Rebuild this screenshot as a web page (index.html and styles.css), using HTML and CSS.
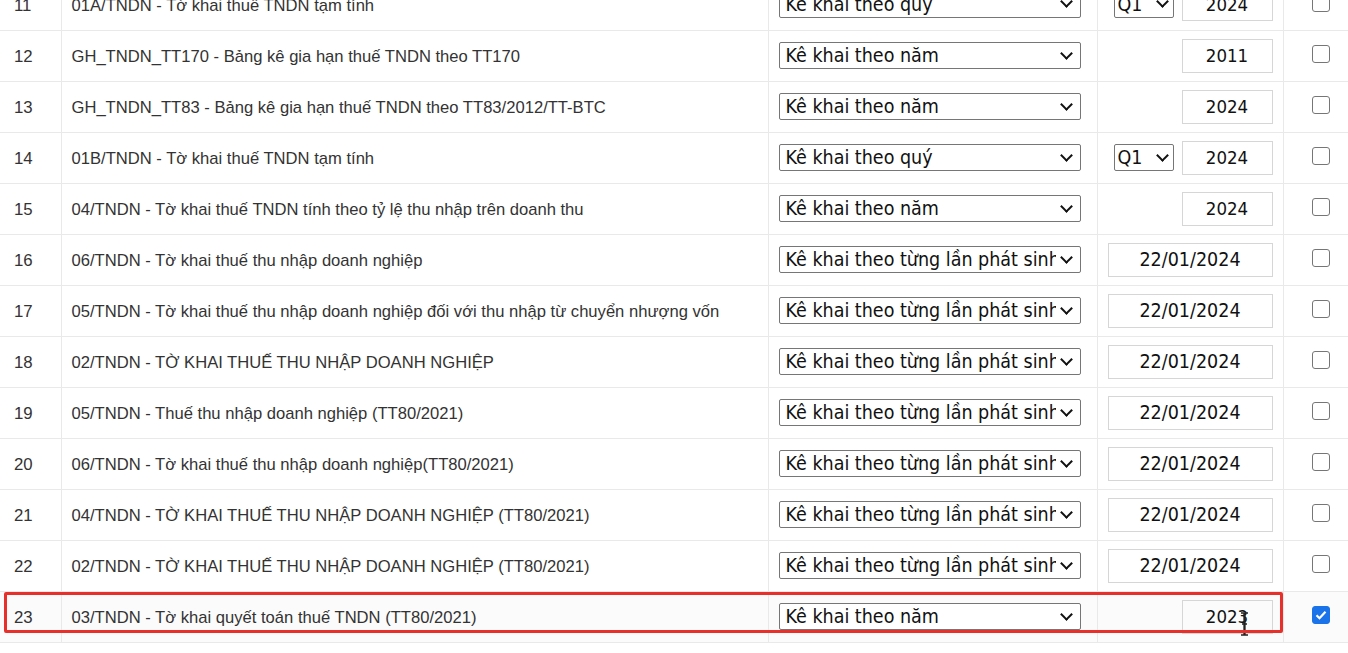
FILE: index.html
```html
<!DOCTYPE html>
<html lang="vi">
<head>
<meta charset="utf-8">
<title>Tờ khai TNDN</title>
<link rel="stylesheet" href="styles.css">
</head>
<body>
<div class="wrap">
<table class="grid">
<colgroup>
<col class="c-no"><col class="c-name"><col class="c-type"><col class="c-period"><col class="c-chk">
</colgroup>
<tbody>
<tr>
<td class="no">11</td><td class="name">01A/TNDN - Tờ khai thuế TNDN tạm tính</td>
<td><div class="sel wide"><span>Kê khai theo quý</span><i class="car"></i></div></td>
<td><div class="period"><div class="sel q"><span>Q1</span><i class="car"></i></div><div class="inp year">2024</div></div></td>
<td class="chk"><span class="box"></span></td>
</tr>
<tr>
<td class="no">12</td><td class="name">GH_TNDN_TT170 - Bảng kê gia hạn thuế TNDN theo TT170</td>
<td><div class="sel wide"><span>Kê khai theo năm</span><i class="car"></i></div></td>
<td><div class="period"><div class="inp year">2011</div></div></td>
<td class="chk"><span class="box"></span></td>
</tr>
<tr>
<td class="no">13</td><td class="name">GH_TNDN_TT83 - Bảng kê gia hạn thuế TNDN theo TT83/2012/TT-BTC</td>
<td><div class="sel wide"><span>Kê khai theo năm</span><i class="car"></i></div></td>
<td><div class="period"><div class="inp year">2024</div></div></td>
<td class="chk"><span class="box"></span></td>
</tr>
<tr>
<td class="no">14</td><td class="name">01B/TNDN - Tờ khai thuế TNDN tạm tính</td>
<td><div class="sel wide"><span>Kê khai theo quý</span><i class="car"></i></div></td>
<td><div class="period"><div class="sel q"><span>Q1</span><i class="car"></i></div><div class="inp year">2024</div></div></td>
<td class="chk"><span class="box"></span></td>
</tr>
<tr>
<td class="no">15</td><td class="name">04/TNDN - Tờ khai thuế TNDN tính theo tỷ lệ thu nhập trên doanh thu</td>
<td><div class="sel wide"><span>Kê khai theo năm</span><i class="car"></i></div></td>
<td><div class="period"><div class="inp year">2024</div></div></td>
<td class="chk"><span class="box"></span></td>
</tr>
<tr>
<td class="no">16</td><td class="name">06/TNDN - Tờ khai thuế thu nhập doanh nghiệp</td>
<td><div class="sel wide"><span>Kê khai theo từng lần phát sinh</span><i class="car"></i></div></td>
<td><div class="period"><div class="inp date">22/01/2024</div></div></td>
<td class="chk"><span class="box"></span></td>
</tr>
<tr>
<td class="no">17</td><td class="name">05/TNDN - Tờ khai thuế thu nhập doanh nghiệp đối với thu nhập từ chuyển nhượng vốn</td>
<td><div class="sel wide"><span>Kê khai theo từng lần phát sinh</span><i class="car"></i></div></td>
<td><div class="period"><div class="inp date">22/01/2024</div></div></td>
<td class="chk"><span class="box"></span></td>
</tr>
<tr>
<td class="no">18</td><td class="name">02/TNDN - TỜ KHAI THUẾ THU NHẬP DOANH NGHIỆP</td>
<td><div class="sel wide"><span>Kê khai theo từng lần phát sinh</span><i class="car"></i></div></td>
<td><div class="period"><div class="inp date">22/01/2024</div></div></td>
<td class="chk"><span class="box"></span></td>
</tr>
<tr>
<td class="no">19</td><td class="name">05/TNDN - Thuế thu nhập doanh nghiệp (TT80/2021)</td>
<td><div class="sel wide"><span>Kê khai theo từng lần phát sinh</span><i class="car"></i></div></td>
<td><div class="period"><div class="inp date">22/01/2024</div></div></td>
<td class="chk"><span class="box"></span></td>
</tr>
<tr>
<td class="no">20</td><td class="name">06/TNDN - Tờ khai thuế thu nhập doanh nghiệp(TT80/2021)</td>
<td><div class="sel wide"><span>Kê khai theo từng lần phát sinh</span><i class="car"></i></div></td>
<td><div class="period"><div class="inp date">22/01/2024</div></div></td>
<td class="chk"><span class="box"></span></td>
</tr>
<tr>
<td class="no">21</td><td class="name">04/TNDN - TỜ KHAI THUẾ THU NHẬP DOANH NGHIỆP (TT80/2021)</td>
<td><div class="sel wide"><span>Kê khai theo từng lần phát sinh</span><i class="car"></i></div></td>
<td><div class="period"><div class="inp date">22/01/2024</div></div></td>
<td class="chk"><span class="box"></span></td>
</tr>
<tr>
<td class="no">22</td><td class="name">02/TNDN - TỜ KHAI THUẾ THU NHẬP DOANH NGHIỆP (TT80/2021)</td>
<td><div class="sel wide"><span>Kê khai theo từng lần phát sinh</span><i class="car"></i></div></td>
<td><div class="period"><div class="inp date">22/01/2024</div></div></td>
<td class="chk"><span class="box"></span></td>
</tr>
<tr class="hl">
<td class="no">23</td><td class="name">03/TNDN - Tờ khai quyết toán thuế TNDN (TT80/2021)</td>
<td><div class="sel wide"><span>Kê khai theo năm</span><i class="car"></i></div></td>
<td><div class="period"><div class="inp year">2023<svg class="ibeam" width="9" height="24" viewBox="0 0 9 24"><path d="M1 1h3v22H1M8 1H5v22h3M2 12h5" fill="none" stroke="#222" stroke-width="1.3"/></svg></div></div></td>
<td class="chk"><span class="box on"><svg width="12" height="10" viewBox="0 0 12 10"><path d="M1.5 5.2l3 3 6-6.5" fill="none" stroke="#fff" stroke-width="2.2"/></svg></span></td>
</tr>
</tbody>
</table>
<div class="redbox"></div>
</div>
</body>
</html>
```
FILE: styles.css
```css
html, body { margin: 0; padding: 0; background: #fff; }
body { font-family: "Liberation Sans", Arial, sans-serif; color: #333; overflow: hidden; }
.wrap { position: relative; margin-top: -21px; }
.grid { border-collapse: collapse; width: 1360px; table-layout: fixed; }
.c-no { width: 61px; }
.c-name { width: 707px; }
.c-type { width: 329px; }
.c-period { width: 186px; }
.c-chk { width: 77px; }
.grid td { border: 1px solid #e9e9e9; height: 51px; padding: 0 10px; vertical-align: middle; box-sizing: border-box; }
.grid tr:first-child td { border-top: none; }
.grid td:first-child { border-left: none; }
td.no { padding-left: 14px; font-size: 16.8px; padding-top: 3px; }
td.name { font-size: 16.6px; padding-top: 3px; white-space: nowrap; }
.sel { display: flex; align-items: center; justify-content: space-between; box-sizing: border-box; height: 27px; border: 1px solid #767676; border-radius: 2px; background: #fff; font-family: "DejaVu Sans Condensed", "DejaVu Sans", sans-serif; font-size: 19.5px; color: #111; padding: 0 7px 0 6px; white-space: nowrap; overflow: hidden; }
.sel span { overflow: hidden; flex: 1; }
.sel.wide { width: 302px; }
.car { width: 7px; height: 7px; border-right: 2.3px solid #111; border-bottom: 2.3px solid #111; transform: rotate(45deg); margin: -5px 2px 0 6px; flex: none; }
.sel.q { width: 60px; padding: 0 4px 0 3px; }
.sel.q .car { margin-left: 4px; }
.period { display: flex; justify-content: flex-end; align-items: center; gap: 8px; }
.inp { box-sizing: border-box; height: 34px; border: 1px solid #d6d6d6; display: flex; align-items: center; justify-content: center; font-family: "DejaVu Sans Condensed", "DejaVu Sans", sans-serif; font-size: 19.5px; color: #111; position: relative; }
.inp.year { width: 91px; font-size: 18.5px; }
.inp.date { width: 167px; }
td.chk { text-align: left; padding-left: 28px; }
.box { display: inline-flex; align-items: center; justify-content: center; width: 18px; height: 18px; box-sizing: border-box; border: 1.5px solid #767676; border-radius: 3px; vertical-align: middle; margin-top: -5px; }
.box.on { background: #1a73e8; border-color: #1a73e8; }
.hl td { background: #fbfbfb; }
.ibeam { position: absolute; left: 57px; top: 11px; }
.redbox { position: absolute; left: 4px; top: 613px; width: 1279px; height: 41px; box-sizing: border-box; border: 3px solid #e8302a; border-radius: 2px; pointer-events: none; }
```
